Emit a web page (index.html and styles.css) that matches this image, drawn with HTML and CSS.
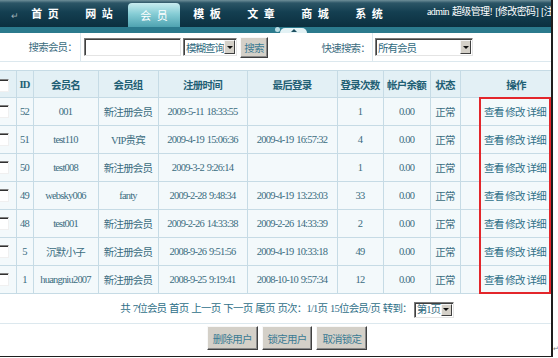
FILE: index.html
```html
<!DOCTYPE html>
<html lang="zh-CN">
<head>
    <meta charset="UTF-8">
    <title>会员管理</title>
    <link rel="stylesheet" href="styles.css">
</head>
<body>
    <div class="page">
        <div class="frame">
            <div class="sheet">
                <div class="topbar">
                    <span class="mark">↵</span>
                    <ul class="nav">
                        <li>首 页</li>
                        <li>网 站</li>
                        <li class="active">会 员</li>
                        <li>模 板</li>
                        <li>文 章</li>
                        <li>商 城</li>
                        <li>系 统</li>
                    </ul>
                    <div class="admin">admin 超级管理! [修改密码] [注销登录]</div>
                </div>
                <div class="strip">
                    <span class="strip-dot"></span>
                    <span class="strip-tab"><i></i></span>
                </div>

                <div class="search">
                    <div class="search-label">搜索会员：</div>
                    <div class="search-main">
                        <span class="text-input"></span>
                        <span class="select select-mode">模糊查询<i class="arrow"></i></span>
                        <button class="btn btn-small">搜索</button>
                        <span class="search-label2">快速搜索：</span>
                    </div>
                    <div class="search-quick">
                        <span class="select select-group">所有会员<i class="arrow"></i></span>
                    </div>
                </div>

                <div class="list">
                    <table class="members">
                        <colgroup>
                            <col style="width:16px"><col style="width:17px"><col style="width:65px"><col style="width:60px"><col style="width:89px">
                            <col style="width:90px"><col style="width:46px"><col style="width:47px"><col style="width:30px"><col style="width:112px">
                        </colgroup>
                        <thead>
                            <tr>
                                <th><span class="chk"></span></th>
                                <th>ID</th>
                                <th>会员名</th>
                                <th>会员组</th>
                                <th>注册时间</th>
                                <th>最后登录</th>
                                <th>登录次数</th>
                                <th>帐户余额</th>
                                <th>状态</th>
                                <th>操作</th>
                            </tr>
                        </thead>
                        <tbody>
                            <tr><td><span class="chk"></span></td><td>52</td><td>001</td><td>新注册会员</td><td>2009-5-11 18:33:55</td><td></td><td>1</td><td>0.00</td><td>正常</td><td class="ops">查看 修改 详细</td></tr>
                            <tr><td><span class="chk"></span></td><td>51</td><td>test110</td><td>VIP贵宾</td><td>2009-4-19 15:06:36</td><td>2009-4-19 16:57:32</td><td>4</td><td>0.00</td><td>正常</td><td class="ops">查看 修改 详细</td></tr>
                            <tr><td><span class="chk"></span></td><td>50</td><td>test008</td><td>新注册会员</td><td>2009-3-2 9:26:14</td><td></td><td>1</td><td>0.00</td><td>正常</td><td class="ops">查看 修改 详细</td></tr>
                            <tr><td><span class="chk"></span></td><td>49</td><td>websky006</td><td>fanty</td><td>2009-2-28 9:48:34</td><td>2009-4-19 13:23:03</td><td>33</td><td>0.00</td><td>正常</td><td class="ops">查看 修改 详细</td></tr>
                            <tr><td><span class="chk"></span></td><td>48</td><td>test001</td><td>新注册会员</td><td>2009-2-26 14:33:38</td><td>2009-2-26 14:33:39</td><td>2</td><td>0.00</td><td>正常</td><td class="ops">查看 修改 详细</td></tr>
                            <tr><td><span class="chk"></span></td><td>5</td><td>沉默小子</td><td>新注册会员</td><td>2008-9-26 9:51:56</td><td>2009-4-19 10:33:18</td><td>49</td><td>0.00</td><td>正常</td><td class="ops">查看 修改 详细</td></tr>
                            <tr><td><span class="chk"></span></td><td>1</td><td>huangniu2007</td><td>新注册会员</td><td>2008-9-25 9:19:41</td><td>2008-10-10 9:57:34</td><td>12</td><td>0.00</td><td>正常</td><td class="ops">查看 修改 详细</td></tr>
                        </tbody>
                    </table>

                    <div class="pager">
                        共 7位会员 首页 上一页 下一页 尾页 页次：1/1页 15位会员/页 转到：<span class="select select-page">第1页<i class="arrow"></i></span>
                    </div>

                    <div class="actions">
                        <button class="btn">删除用户</button>
                        <button class="btn">锁定用户</button>
                        <button class="btn">取消锁定</button>
                    </div>

                    <!-- red annotation box round the operation links -->
                    <div class="highlight"></div>
                </div>
            </div>
        </div>
        <span class="mark end">↵</span>
    </div>
</body>
</html>
```

FILE: styles.css
```css
* {
    margin: 0;
    padding: 0;
    box-sizing: border-box;
}

body {
    font-family: 'Liberation Serif', 'Noto Sans CJK SC', serif;
    font-size: 10.5px;
    letter-spacing: -0.8px;
    word-spacing: 1px;
    color: #3a6c80;
    background: white;
}

.page {
    display: flex;
    align-items: flex-end;
}

.frame {
    width: 553px;
    height: 357px;
    flex-shrink: 0;
    overflow: hidden;
    border-right: 2px solid #1e1e1e;
    border-bottom: 1px solid #1e1e1e;
}

.sheet {
    width: 572px;
}

.mark {
    color: #9fb0b8;
    font-size: 9px;
    letter-spacing: 0;
}

.mark.end {
    margin: 0 0 4px 0;
    font-size: 7px;
    color: #777;
}

/* top navigation */
.topbar {
    display: flex;
    height: 27px;
    background: linear-gradient(#6f8f99 0, #2b5566 3px, #143f51 12px, #0b2f3f 100%);
}

.topbar .mark {
    width: 18px;
    padding: 11px 0 0 11px;
}

.nav {
    display: flex;
    list-style: none;
}

.nav li {
    width: 54px;
    line-height: 27px;
    text-align: center;
    color: white;
    font-family: 'Noto Sans CJK SC', sans-serif;
    font-size: 11px;
    font-weight: bold;
    letter-spacing: 0;
    word-spacing: 3px;
}

.nav li.active {
    margin: 3px 0 0 2px;
    width: 52px;
    line-height: 24px;
    font-weight: normal;
    border-radius: 4px 4px 0 0;
    background: linear-gradient(#c9ecef 0%, #86cdd5 45%, #4fa3b1 100%);
}

.admin {
    padding: 3px 0 0 31px;
    white-space: nowrap;
    color: white;
    font-size: 10px;
    letter-spacing: -0.6px;
}

.strip {
    display: flex;
    align-items: flex-end;
    height: 6px;
    padding-left: 275px;
    background: #2b7a8d;
}

.strip-dot {
    width: 5px;
    height: 5px;
    margin-bottom: 1px;
    border-radius: 50%;
    background: #b9dde4;
}

.strip-tab {
    display: flex;
    justify-content: center;
    align-items: center;
    width: 27px;
    height: 5px;
    border-radius: 5px 5px 0 0;
    background: #e3f2f5;
}

.strip-tab i {
    border-left: 3px solid transparent;
    border-right: 3px solid transparent;
    border-bottom: 3px solid #1d4f60;
}

/* search row */
.search {
    display: flex;
    height: 29px;
    border-bottom: 1px solid #dce8ee;
}

.search-label {
    width: 81px;
    padding-right: 3px;
    line-height: 28px;
    text-align: right;
    border-right: 1px solid #dce8ee;
    font-family: 'Noto Sans CJK SC', sans-serif;
}

.search-main {
    display: flex;
    align-items: center;
    width: 292px;
    padding-left: 3px;
    border-right: 1px solid #dce8ee;
}

.search-label2 {
    margin-left: auto;
    padding-right: 2px;
    font-family: 'Noto Sans CJK SC', sans-serif;
}

.search-quick {
    display: flex;
    align-items: center;
    padding-left: 2px;
}

.text-input {
    width: 97px;
    height: 18px;
    background: white;
    border: 1px solid;
    border-color: #7a7a7a #e4e4e4 #e4e4e4 #7a7a7a;
    box-shadow: inset 1px 1px 0 #404040;
}

.select {
    display: flex;
    align-items: center;
    height: 18px;
    padding-left: 2px;
    overflow: hidden;
    white-space: nowrap;
    letter-spacing: -1px;
    background: white;
    border: 1px solid;
    border-color: #7a7a7a #e4e4e4 #e4e4e4 #7a7a7a;
    box-shadow: inset 1px 1px 0 #404040;
    font-family: 'Noto Sans CJK SC', sans-serif;
    color: #2f6a80;
}

.select .arrow {
    display: flex;
    flex-shrink: 0;
    justify-content: center;
    align-items: center;
    width: 11px;
    height: 14px;
    margin-left: auto;
    margin-right: 1px;
    background: #d4d0c8;
    border: 1px solid;
    border-color: #f4f4f4 #404040 #404040 #f4f4f4;
}

.select .arrow::after {
    content: '';
    border-left: 3px solid transparent;
    border-right: 3px solid transparent;
    border-top: 3px solid #111;
}

.select-mode {
    width: 54px;
    margin-left: 2px;
}

.select-group {
    width: 98px;
}

.select-page {
    display: inline-flex;
    width: 40px;
    height: 16px;
    margin-left: 2px;
    vertical-align: middle;
    font-family: 'Liberation Serif', 'Noto Sans CJK SC', serif;
}

.select-page .arrow {
    height: 12px;
}

.btn {
    height: 24px;
    padding: 0 5px;
    background: #d4d0c8;
    border: 1px solid;
    border-color: #f8f8f8 #404040 #404040 #f8f8f8;
    box-shadow: inset -1px -1px 0 #8a8a8a;
    color: #3b7b93;
    font-family: 'Noto Sans CJK SC', sans-serif;
    font-size: 10.5px;
    letter-spacing: -0.8px;
}

.btn-small {
    width: 28px;
    height: 21px;
    margin-left: 3px;
    padding: 0;
}

/* member list */
.list {
    position: relative;
    margin-top: 8px;
}

.members {
    width: 572px;
    table-layout: fixed;
    border-collapse: collapse;
}

.members th,
.members td {
    height: 28px;
    padding: 0;
    border: 1px solid #c6dbe5;
    text-align: center;
    white-space: nowrap;
    overflow: hidden;
}

.members th {
    height: 27px;
    background: #e3f0f5;
    color: #1f5f74;
    font-family: 'Noto Sans CJK SC', sans-serif;
    font-weight: bold;
}

.members th:nth-child(2) {
    font-family: 'Liberation Serif', serif;
}

.members td {
    background: #f3f9fb;
}

.members th:first-child,
.members td:first-child {
    text-align: left;
    border-left: none;
}

.members td.ops {
    color: #2f7088;
    word-spacing: 0;
    padding-right: 2px;
}

.chk {
    display: inline-block;
    width: 13px;
    height: 13px;
    margin-left: -4px;
    vertical-align: middle;
    background: white;
    border: 1px solid;
    border-color: #808080 #f0f0f0 #f0f0f0 #808080;
    box-shadow: inset 1px 1px 0 #303030;
}

.pager {
    height: 30px;
    padding-left: 2px;
    line-height: 29px;
    text-align: center;
    white-space: nowrap;
    border-bottom: 1px solid #dce8ee;
    color: #2f7088;
}

.actions {
    display: flex;
    justify-content: center;
    gap: 4px;
    padding: 2px 0 0 2px;
}

.highlight {
    position: absolute;
    top: 27px;
    left: 479px;
    width: 72px;
    height: 197px;
    border: 2px solid #e3262b;
}
```
